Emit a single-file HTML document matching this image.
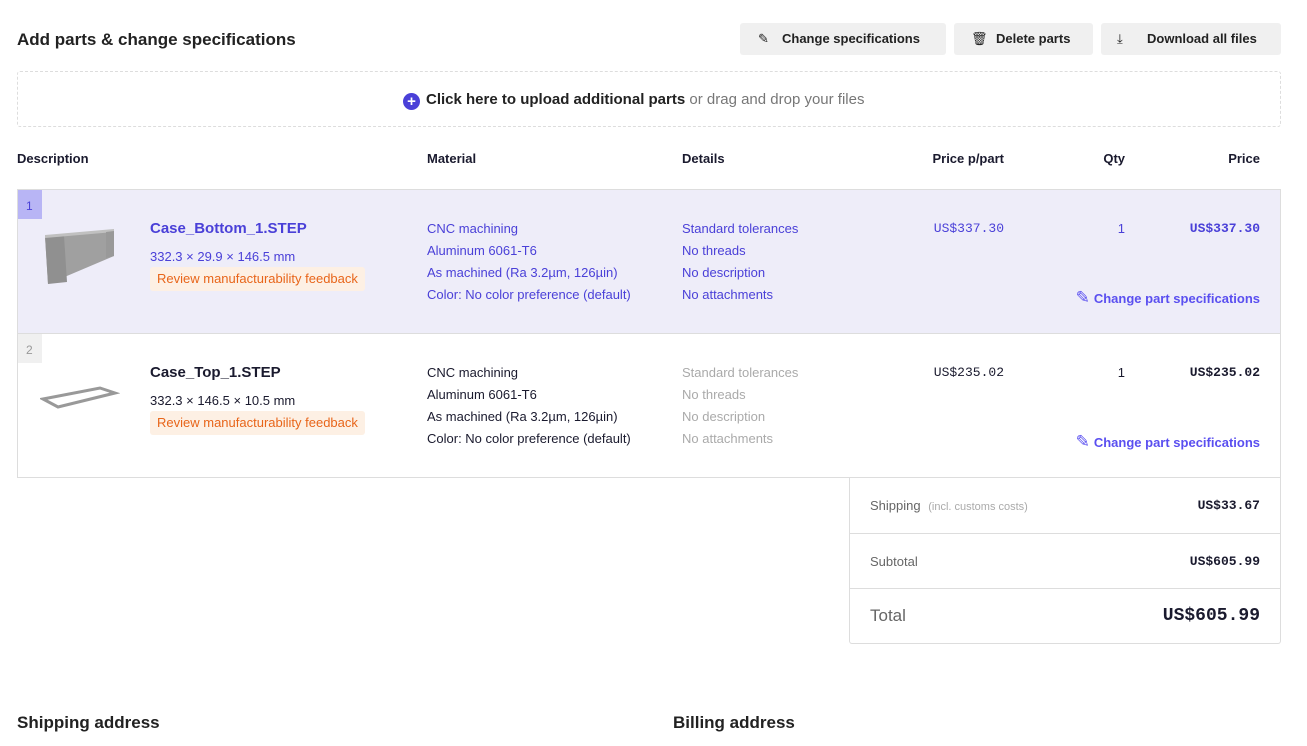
<!DOCTYPE html>
<html><head><meta charset="utf-8"><style>
*{margin:0;padding:0;box-sizing:border-box}
body{width:1307px;height:746px;background:#fff;font-family:"Liberation Sans",sans-serif;color:#1a1a2e;position:relative;overflow:hidden}
.a{position:absolute;white-space:nowrap}
.btn{position:absolute;top:23px;height:32px;background:#f0f0f0;border-radius:3px;font-size:13px;font-weight:bold;color:#222;line-height:32px}
.mono{font-family:"Liberation Mono",monospace}
.t13{font-size:13px}
.acc{color:#4a40d8}
.grey{color:#aaa}
.badge{position:absolute;background:#fdf0e4;color:#e8651a;font-size:13px;padding:0 7px;height:24px;line-height:24px;border-radius:3px}
</style></head><body>
<div class="a" style="left:17px;top:30px;font-size:17px;font-weight:bold;color:#222">Add parts &amp; change specifications</div>
<div class="btn" style="left:740px;width:206px"><span style="position:absolute;left:18px;font-weight:normal">✎</span><span style="position:absolute;left:42px">Change specifications</span></div>
<div class="btn" style="left:954px;width:139px"><span style="position:absolute;left:17px;font-weight:normal">🗑︎</span><span style="position:absolute;left:42px">Delete parts</span></div>
<div class="btn" style="left:1101px;width:180px"><span style="position:absolute;left:16px;font-weight:normal">⤓</span><span style="position:absolute;left:46px">Download all files</span></div>
<div class="a" style="left:17px;top:71px;width:1264px;height:56px;border:1px dashed #ddd;border-radius:3px"></div>
<div class="a" style="left:403px;top:91px;font-size:15px;color:#777"><span style="display:inline-block;width:17px;height:17px;border-radius:50%;background:#4a40d8;color:#fff;text-align:center;line-height:17px;font-weight:bold;font-size:15px;vertical-align:-2px;margin-right:6px">+</span><b style="color:#222">Click here to upload additional parts</b> or drag and drop your files</div>
<div class="a t13" style="left:17px;top:151px;font-weight:bold">Description</div>
<div class="a t13" style="left:427px;top:151px;font-weight:bold">Material</div>
<div class="a t13" style="left:682px;top:151px;font-weight:bold">Details</div>
<div class="a t13" style="right:303px;top:151px;font-weight:bold">Price p/part</div>
<div class="a t13" style="right:182px;top:151px;font-weight:bold">Qty</div>
<div class="a t13" style="right:47px;top:151px;font-weight:bold">Price</div>

<div class="a" style="left:17px;top:189px;width:1264px;height:289px;border:1px solid #ddd"></div>
<div class="a" style="left:18px;top:190px;width:1262px;height:143px;background:#eeedf9"></div>
<div class="a" style="left:18px;top:333px;width:1262px;height:1px;background:#ddd"></div>
<div class="a" style="left:18px;top:190px;width:24px;height:29px;background:#b8b5f5;color:#4a40d8;font-size:12px;padding:9px 0 0 8px">1</div>
<div class="a" style="left:18px;top:334px;width:24px;height:29px;background:#f0f0f0;color:#999;font-size:12px;padding:9px 0 0 8px">2</div>
<svg class="a" style="left:40px;top:226px" width="80" height="62"><polygon points="5,10 74,4 74,30 8,58" fill="#a0a0a0"/><polygon points="5,10 24,9 27,56 8,58" fill="#909090"/><polygon points="5,9 74,3 74,6 5,12" fill="#c0c0c0"/><polygon points="66,6 74,5 74,30 66,32" fill="#999"/></svg>
<svg class="a" style="left:40px;top:385px" width="80" height="30"><polygon points="3,14 60,3 75,8 18,22" fill="none" stroke="#999" stroke-width="3"/></svg>

<div class="a acc" style="left:150px;top:220px;font-size:15px;font-weight:bold">Case_Bottom_1.STEP</div>
<div class="a acc t13" style="left:150px;top:249px">332.3 × 29.9 × 146.5 mm</div>
<div class="badge" style="left:150px;top:267px">Review manufacturability feedback</div>
<div class="a acc t13" style="left:427px;top:218px;line-height:22px">CNC machining<br>Aluminum 6061-T6<br>As machined (Ra 3.2µm, 126µin)<br>Color: No color preference (default)</div>
<div class="a acc t13" style="left:682px;top:218px;line-height:22px">Standard tolerances<br>No threads<br>No description<br>No attachments</div>
<div class="a acc t13 mono" style="right:303px;top:221px">US$337.30</div>
<div class="a acc t13" style="right:182px;top:221px">1</div>
<div class="a acc t13 mono" style="right:47px;top:221px;font-weight:bold">US$337.30</div>
<div class="a acc t13" style="right:47px;top:288px;font-weight:bold;color:#5a4ff0"><span style="font-size:17px;font-weight:normal;margin-right:4px">✎</span>Change part specifications</div>

<div class="a" style="left:150px;top:364px;font-size:15px;font-weight:bold">Case_Top_1.STEP</div>
<div class="a t13" style="left:150px;top:393px">332.3 × 146.5 × 10.5 mm</div>
<div class="badge" style="left:150px;top:411px">Review manufacturability feedback</div>
<div class="a t13" style="left:427px;top:362px;line-height:22px">CNC machining<br>Aluminum 6061-T6<br>As machined (Ra 3.2µm, 126µin)<br>Color: No color preference (default)</div>
<div class="a grey t13" style="left:682px;top:362px;line-height:22px">Standard tolerances<br>No threads<br>No description<br>No attachments</div>
<div class="a t13 mono" style="right:303px;top:365px">US$235.02</div>
<div class="a t13" style="right:182px;top:365px">1</div>
<div class="a t13 mono" style="right:47px;top:365px;font-weight:bold">US$235.02</div>
<div class="a t13" style="right:47px;top:432px;font-weight:bold;color:#5a4ff0"><span style="font-size:17px;font-weight:normal;margin-right:4px">✎</span>Change part specifications</div>

<div class="a" style="left:849px;top:477px;width:432px;height:167px;border:1px solid #ddd;border-top:none;border-radius:0 0 3px 3px"></div>
<div class="a" style="left:849px;top:533px;width:432px;height:1px;background:#ddd"></div>
<div class="a" style="left:849px;top:588px;width:432px;height:1px;background:#ddd"></div>
<div class="a t13" style="left:870px;top:498px;color:#666">Shipping <span style="font-size:11px;color:#aaa;margin-left:4px">(incl. customs costs)</span></div>
<div class="a t13 mono" style="right:47px;top:498px;font-weight:bold">US$33.67</div>
<div class="a t13" style="left:870px;top:554px;color:#666">Subtotal</div>
<div class="a t13 mono" style="right:47px;top:554px;font-weight:bold">US$605.99</div>
<div class="a" style="left:870px;top:606px;font-size:17px;color:#666">Total</div>
<div class="a mono" style="right:47px;top:606px;font-size:18px;font-weight:bold">US$605.99</div>

<div class="a" style="left:17px;top:713px;font-size:17px;font-weight:bold;color:#222">Shipping address</div>
<div class="a" style="left:673px;top:713px;font-size:17px;font-weight:bold;color:#222">Billing address</div>
</body></html>
